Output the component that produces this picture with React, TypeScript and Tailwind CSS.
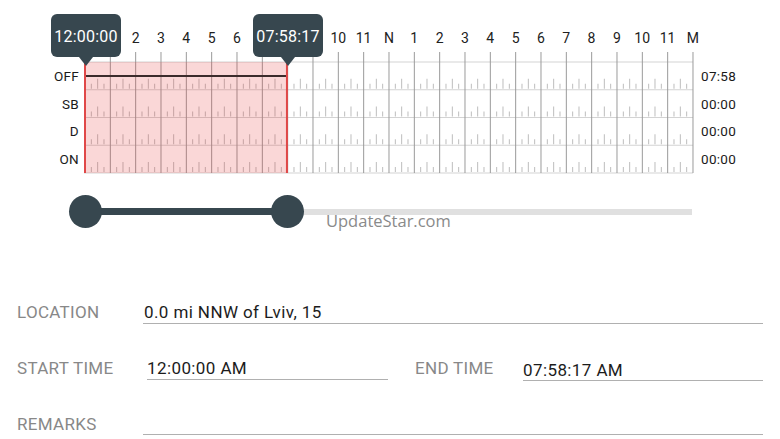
import React from "react";

const HW = 25.3333;
const hourLabels = [
  "M", "1", "2", "3", "4", "5", "6", "7", "8", "9", "10", "11",
  "N", "1", "2", "3", "4", "5", "6", "7", "8", "9", "10", "11", "M",
];
const hidden = [0, 1, 7, 8, 9];
const states = ["OFF", "SB", "D", "ON"];
const totals = ["07:58", "00:00", "00:00", "00:00"];

function Grid() {
  const x = (i: number) => 1 + i * HW;
  const top = 10;
  const rowH = 27.75;
  const bottom = top + 4 * rowH;
  const end = x(7.9714);
  const ticks: React.ReactNode[] = [];
  for (let r = 0; r < 4; r++) {
    const rb = top + (r + 1) * rowH - 1;
    for (let i = 0; i < 24; i++) {
      for (let q = 1; q <= 3; q++) {
        const tx = x(i) + (q * HW) / 4;
        ticks.push(
          <line
            key={`t${r}-${i}-${q}`}
            x1={tx}
            x2={tx}
            y1={rb - (q === 2 ? 10 : 5)}
            y2={rb}
            stroke="#bdbdbd"
            strokeWidth={1}
          />
        );
      }
    }
  }
  return (
    <svg width={612} height={123} className="block shrink-0">
      {[0, 1, 2, 3, 4].map((r) => (
        <line
          key={`h${r}`}
          x1={0}
          x2={x(24)}
          y1={top + r * rowH}
          y2={top + r * rowH}
          stroke="#d3d3d3"
          strokeWidth={1}
        />
      ))}
      {ticks}
      {Array.from({ length: 25 }, (_, i) => (
        <line
          key={`v${i}`}
          x1={x(i)}
          x2={x(i)}
          y1={0}
          y2={bottom}
          stroke="#9a9a9a"
          strokeWidth={1}
        />
      ))}
      <rect x={1} y={top} width={end - 1} height={bottom - top} fill="#e53935" fillOpacity={0.2} />
      <line x1={1} x2={end} y1={top + 14} y2={top + 14} stroke="#3b2b2b" strokeWidth={2} />
      <line x1={1} x2={1} y1={top} y2={bottom} stroke="#e04848" strokeWidth={2} />
      <line x1={end} x2={end} y1={top} y2={bottom} stroke="#e04848" strokeWidth={2} />
    </svg>
  );
}

function Tip({ left, text }: { left: string; text: string }) {
  return (
    <div className={`absolute top-[14px] ${left} z-10`}>
      <div className="relative w-[70px] h-[43px] rounded-[6px] bg-[#37474f] text-white text-[16px] tracking-[0.2px] flex items-center justify-center pt-[3px]">
        {text}
        <div className="absolute left-1/2 -translate-x-1/2 top-full w-0 h-0 border-l-[7px] border-r-[7px] border-t-[9px] border-l-transparent border-r-transparent border-t-[#37474f]" />
      </div>
    </div>
  );
}

export default function App() {
  return (
    <div className="relative w-[780px] h-[439px] bg-white overflow-hidden font-['Roboto',sans-serif]">
      {/* chart */}
      <div className="pt-[30px]">
        <div className="flex ml-[72.33px] h-[16px] leading-[16px] text-[14px] text-[#212121]">
          {hourLabels.map((h, i) => (
            <div key={i} className="w-[25.333px] shrink-0 text-center">
              {hidden.includes(i) ? "" : h}
            </div>
          ))}
        </div>
        <div className="flex mt-[6px]">
          <div className="w-[84px] shrink-0 pt-[10px] pr-[5px] flex flex-col text-[13.5px] tracking-[0.3px] text-[#1a1a1a]">
            {states.map((s) => (
              <div key={s} className="h-[27.75px] flex items-center justify-end">
                {s}
              </div>
            ))}
          </div>
          <Grid />
          <div className="ml-[5px] pt-[10px] flex flex-col text-[13.5px] tracking-[0.3px] text-[#1a1a1a]">
            {totals.map((t, i) => (
              <div key={i} className="h-[27.75px] flex items-center">
                {t}
              </div>
            ))}
          </div>
        </div>
      </div>

      <Tip left="left-[51px]" text="12:00:00" />
      <Tip left="left-[253px]" text="07:58:17" />

      {/* slider */}
      <div className="relative ml-[69px] mt-[20px] w-[640px] h-[33px]">
        <div className="absolute left-[16px] top-[14px] w-[607px] h-[6px] bg-[#e0e0e0]" />
        <div className="absolute left-[16px] top-[13px] w-[203px] h-[7px] bg-[#37474f]" />
        <div className="absolute left-0 top-0 w-[33px] h-[33px] rounded-full bg-[#37474f]" />
        <div className="absolute left-[202px] top-0 w-[33px] h-[33px] rounded-full bg-[#37474f]" />
      </div>
      <div className="absolute left-[326px] top-[210px] text-[16.5px] leading-[22px] text-[#8a8a8a] font-['Open_Sans',sans-serif]">
        UpdateStar.com
      </div>

      {/* form */}
      <div className="mt-[74px] flex flex-col text-[17px] leading-[20px]">
        <div className="flex items-start">
          <div className="w-[143px] shrink-0 pl-[17px] text-[#888888] tracking-[0.3px]">LOCATION</div>
          <div className="flex-1 mr-[17px] pl-[1px] pb-[1px] border-b border-[#b0b0b0] text-[#1c1c1c] tracking-[0.4px]">
            0.0 mi NNW of Lviv, 15
          </div>
        </div>
        <div className="flex items-start mt-[34px]">
          <div className="w-[147px] shrink-0 pl-[17px] text-[#888888] tracking-[0.3px]">START TIME</div>
          <div className="w-[241px] shrink-0 pb-[1px] border-b border-[#b0b0b0] text-[#1c1c1c] tracking-[0.4px]">
            12:00:00 AM
          </div>
          <div className="w-[108px] shrink-0 ml-[27px] text-[#888888] tracking-[0.3px]">END TIME</div>
          <div className="flex-1 mr-[17px] mt-[2px] border-b border-[#b0b0b0] text-[#1c1c1c] tracking-[0.4px]">
            07:58:17 AM
          </div>
        </div>
        <div className="flex items-start mt-[33px]">
          <div className="w-[143px] shrink-0 pl-[17px] text-[#888888] tracking-[0.3px]">REMARKS</div>
          <div className="flex-1 mr-[17px] h-[21px] border-b border-[#b0b0b0]" />
        </div>
      </div>
    </div>
  );
}
